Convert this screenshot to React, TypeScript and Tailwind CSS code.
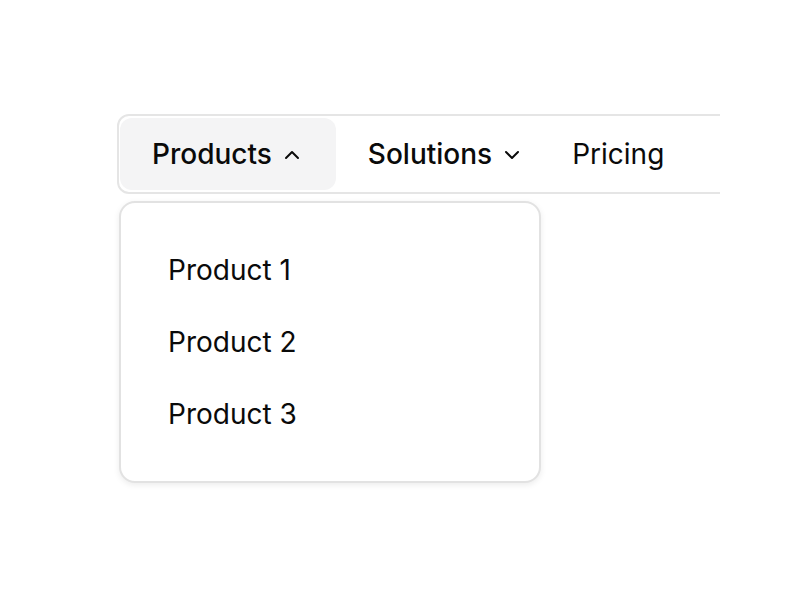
import React from "react";

function Chevron({ up }: { up?: boolean }) {
  return (
    <svg
      width="24"
      height="24"
      viewBox="0 0 24 24"
      fill="none"
      stroke="currentColor"
      strokeWidth="2"
      strokeLinecap="round"
      strokeLinejoin="round"
      className="ml-[8px] relative top-[1px]"
    >
      {up ? <path d="m6 15 6-6 6 6" /> : <path d="m6 9 6 6 6-6" />}
    </svg>
  );
}

export default function App() {
  return (
    <div
      className="w-[800px] h-[600px] bg-white text-[#0a0a0a] pt-[114px] pl-[117px]"
      style={{ fontFamily: "Inter, 'Noto Sans', sans-serif" }}
    >
      <div className="w-[603px] overflow-hidden">
        <nav className="w-[720px] border-2 border-[#e5e5e5] rounded-[12px] px-px py-[2px]">
          <ul className="flex items-center">
            <li>
              <button className="flex items-center h-[72px] pl-[32px] pr-[32px] rounded-[12px] bg-[#f4f4f5] text-[28px] font-medium leading-none">
                Products
                <Chevron up />
              </button>
            </li>
            <li>
              <button className="flex items-center h-[72px] pl-[32px] pr-[32px] rounded-[12px] text-[28px] font-medium leading-none">
                Solutions
                <Chevron />
              </button>
            </li>
            <li>
              <a className="flex items-center h-[72px] px-[16px] text-[28px] font-normal leading-none">
                Pricing
              </a>
            </li>
          </ul>
        </nav>
      </div>
      <div className="mt-[7px] ml-[2px] w-[422px] h-[282px] border-2 border-[#e2e2e2] rounded-[16px] bg-white shadow-[0_2px_6px_rgba(0,0,0,0.08)] flex flex-col justify-center pl-[47px]">
        <ul className="flex flex-col">
          <li className="h-[72px] flex items-center text-[28px] leading-none">Product 1</li>
          <li className="h-[72px] flex items-center text-[28px] leading-none">Product 2</li>
          <li className="h-[72px] flex items-center text-[28px] leading-none">Product 3</li>
        </ul>
      </div>
    </div>
  );
}
